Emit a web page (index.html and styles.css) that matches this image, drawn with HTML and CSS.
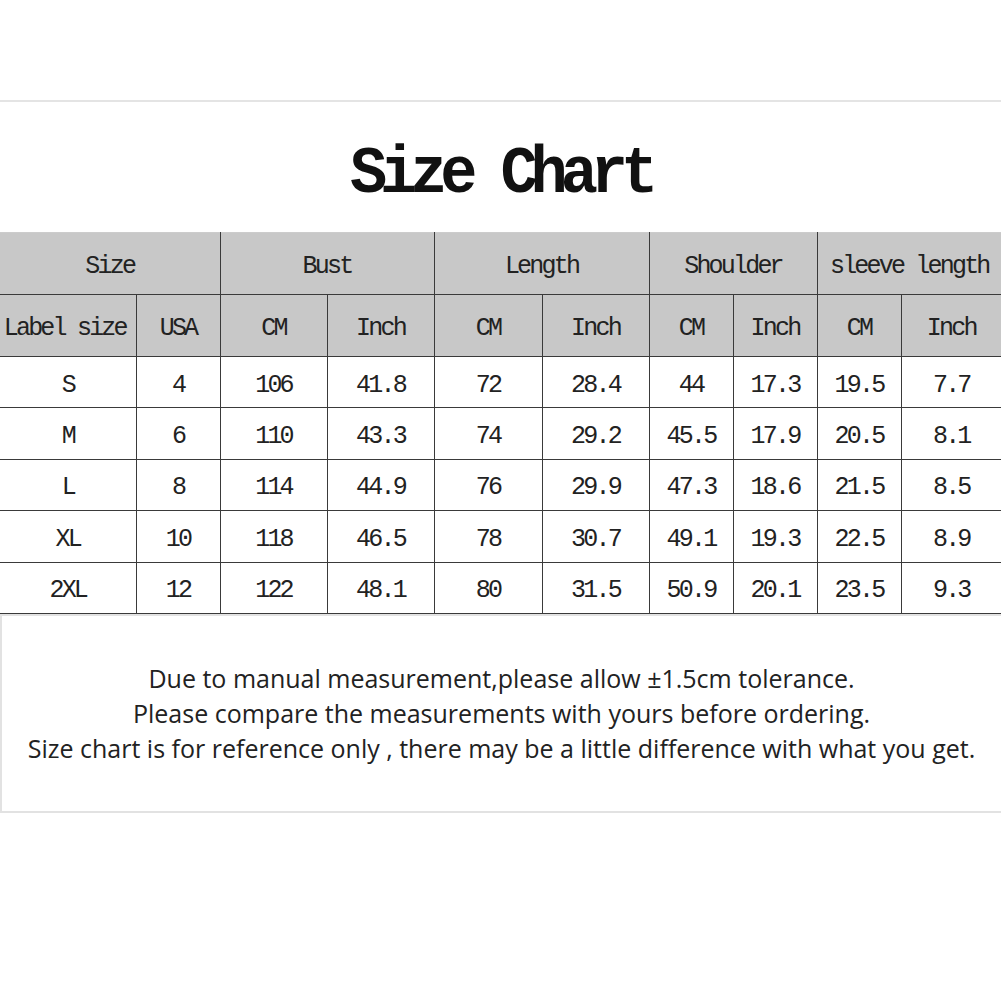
FILE: index.html
```html
<!DOCTYPE html>
<html>
<head>
<meta charset="utf-8">
<link rel="stylesheet" href="styles.css">
</head>
<body>
<div class="topbar"></div>
<div class="title-wrap"><h1 class="title">Size Chart</h1></div>
<table class="chart">
  <colgroup>
    <col style="width:136px"><col style="width:84px"><col style="width:107px"><col style="width:107px"><col style="width:108px"><col style="width:107px"><col style="width:84px"><col style="width:84px"><col style="width:84px"><col style="width:100px">
  </colgroup>
  <thead>
    <tr class="h1">
      <th colspan="2">Size</th>
      <th colspan="2">Bust</th>
      <th colspan="2">Length</th>
      <th colspan="2">Shoulder</th>
      <th colspan="2">sleeve length</th>
    </tr>
    <tr class="h2">
      <th>Label size</th><th>USA</th><th>CM</th><th>Inch</th><th>CM</th><th>Inch</th><th>CM</th><th>Inch</th><th>CM</th><th>Inch</th>
    </tr>
  </thead>
  <tbody>
    <tr><td>S</td><td>4</td><td>106</td><td>41.8</td><td>72</td><td>28.4</td><td>44</td><td>17.3</td><td>19.5</td><td>7.7</td></tr>
    <tr><td>M</td><td>6</td><td>110</td><td>43.3</td><td>74</td><td>29.2</td><td>45.5</td><td>17.9</td><td>20.5</td><td>8.1</td></tr>
    <tr><td>L</td><td>8</td><td>114</td><td>44.9</td><td>76</td><td>29.9</td><td>47.3</td><td>18.6</td><td>21.5</td><td>8.5</td></tr>
    <tr><td>XL</td><td>10</td><td>118</td><td>46.5</td><td>78</td><td>30.7</td><td>49.1</td><td>19.3</td><td>22.5</td><td>8.9</td></tr>
    <tr><td>2XL</td><td>12</td><td>122</td><td>48.1</td><td>80</td><td>31.5</td><td>50.9</td><td>20.1</td><td>23.5</td><td>9.3</td></tr>
  </tbody>
</table>
<div class="note">
  <p>Due to manual measurement,please allow ±1.5cm tolerance.</p>
  <p>Please compare the measurements with yours before ordering.</p>
  <p>Size chart is for reference only , there may be a little difference with what you get.</p>
</div>
</body>
</html>
```
FILE: styles.css
```css
html, body {
  margin: 0;
  padding: 0;
  background: #fff;
}
body {
  width: 1001px;
  overflow: hidden;
}
.topbar {
  height: 100px;
  border-bottom: 2px solid #e4e4e4;
}
.title-wrap {
  height: 130px;
  display: flex;
  align-items: center;
  justify-content: center;
}
.title {
  margin: 0;
  font-family: "Liberation Mono", monospace;
  font-weight: bold;
  font-size: 62px;
  letter-spacing: -7.1px;
  color: #111;
  transform: scaleY(1.08);
  padding-top: 12px;
}
.chart {
  border-collapse: collapse;
  table-layout: fixed;
  width: 1001px;
  font-family: "Liberation Mono", monospace;
  font-size: 25px;
  letter-spacing: -2.8px;
  color: #222;
}
.chart th, .chart td {
  border: 1.5px solid #3a3a3a;
  text-align: center;
  font-weight: normal;
  padding: 6px 0 0 0;
  white-space: nowrap;
  overflow: hidden;
}
.chart tr > :first-child { border-left: none; }
.chart tr > :last-child { border-right: none; }
.chart thead tr.h1 th { border-top: 1px solid #ccc; }
.chart thead th {
  background: #c8c8c8;
}
.chart tr.h2 th:first-child { padding-right: 6px; }
.chart tr.h1 { height: 62px; }
.chart tr.h2 { height: 62px; }
.chart tbody tr { height: 51.4px; }
.note {
  height: 195px;
  border: 2px solid #e2e2e2;
  border-right: none;
  display: flex;
  flex-direction: column;
  align-items: center;
  justify-content: center;
  font-family: "Open Sans", sans-serif;
  font-size: 25px;
  color: #222;
}
.note p {
  margin: 0;
  line-height: 35px;
  white-space: nowrap;
}
```
